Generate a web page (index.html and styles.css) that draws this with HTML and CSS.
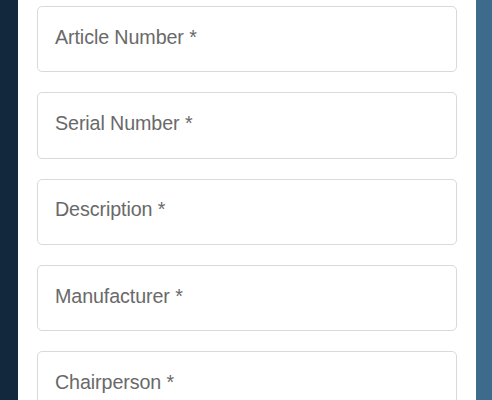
FILE: index.html
```html
<!DOCTYPE html>
<html>
<head>
<meta charset="utf-8">
<link rel="stylesheet" href="styles.css">
</head>
<body>
<div class="layout">
  <div class="side-left"></div>
  <main class="panel">
    <div class="field"><span class="label">Article Number *</span></div>
    <div class="field"><span class="label">Serial Number *</span></div>
    <div class="field"><span class="label">Description *</span></div>
    <div class="field"><span class="label">Manufacturer *</span></div>
    <div class="field"><span class="label">Chairperson *</span></div>
  </main>
  <div class="side-right"></div>
</div>
</body>
</html>
```
FILE: styles.css
```css
html, body {
  margin: 0;
  padding: 0;
  height: 100%;
  overflow: hidden;
}
body {
  font-family: "Liberation Sans", Arial, sans-serif;
}
.layout {
  display: flex;
  height: 400px;
}
.side-left {
  width: 18px;
  background: #12283d;
  flex: none;
}
.side-right {
  width: 16px;
  background: #3e6a8b;
  flex: none;
}
.panel {
  flex: 1;
  background: #ffffff;
  padding: 6px 19px 0 19px;
  display: flex;
  flex-direction: column;
  gap: 20px;
}
.field {
  flex: none;
  height: 66.3px;
  box-sizing: border-box;
  border: 1px solid #d9d9d9;
  border-radius: 5px;
  display: flex;
  align-items: center;
  padding-left: 17px;
  padding-bottom: 4px;
}
.label {
  font-size: 19.7px;
  color: #696969;
  letter-spacing: -0.1px;
}
```
